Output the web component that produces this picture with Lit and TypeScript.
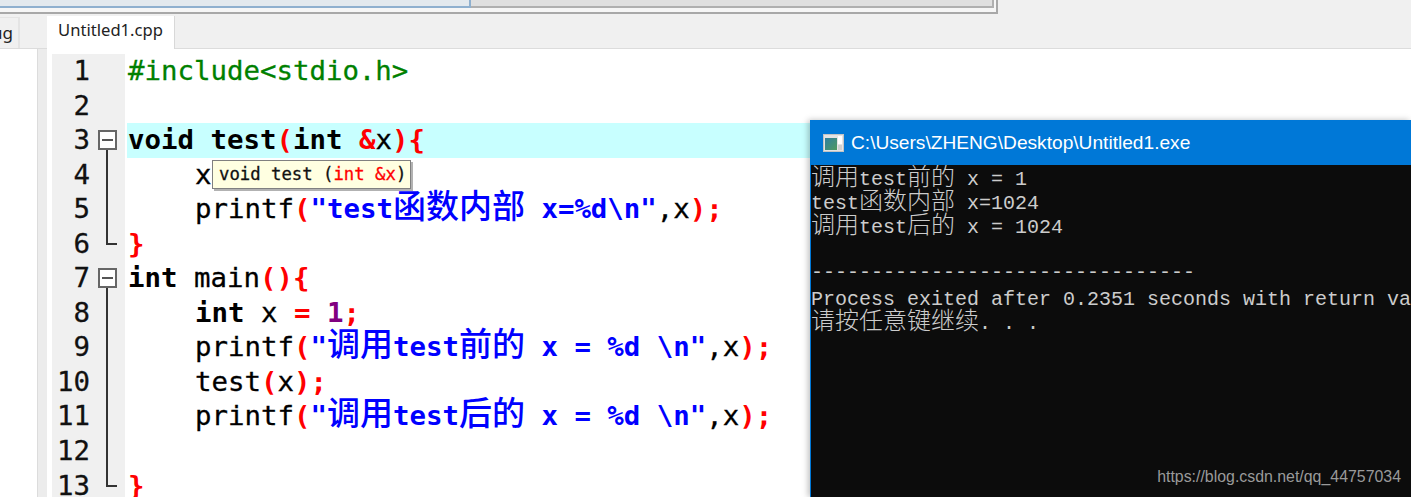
import { LitElement, html, css } from "lit";
import { customElement } from "lit/decorators.js";

type Seg = [string, string?];
const k = "k", r = "r", s = "s", g = "g", n = "n";
const lines: { segs: Seg[]; indent?: boolean; cur?: boolean; fold?: string }[] = [
  { segs: [["#include<stdio.h>", g]] },
  { segs: [] },
  { segs: [["void test", k], ["(", r], ["int ", k], ["&", r], ["x"], ["){", r]], cur: true, fold: "open" },
  { segs: [["x"]], indent: true, fold: "line" },
  { segs: [["printf"], ["(", r], ['"test函数内部 x=%d\\n"', s], [",x"], [");", r]], indent: true, fold: "line" },
  { segs: [["}", r]], fold: "end" },
  { segs: [["int ", k], ["main"], ["(){", r]], fold: "open" },
  { segs: [["int ", k], ["x "], ["= ", r], ["1", n], [";", r]], indent: true, fold: "line" },
  { segs: [["printf"], ["(", r], ['"调用test前的 x = %d \\n"', s], [",x"], [");", r]], indent: true, fold: "line" },
  { segs: [["test"], ["(", r], ["x"], [");", r]], indent: true, fold: "line" },
  { segs: [["printf"], ["(", r], ['"调用test后的 x = %d \\n"', s], [",x"], [");", r]], indent: true, fold: "line" },
  { segs: [], fold: "line" },
  { segs: [["}", r]], fold: "end" },
];

const cjk = /([\u4e00-\u9fff]+)/;
const mixed = (t: string) =>
  t.split(cjk).map((p, i) => (i % 2 ? html`<span class="han">${p}</span>` : p));

@customElement("app-root")
export class AppRoot extends LitElement {
  static styles = css`
    :host { display: block; position: relative; width: 1411px; height: 497px; overflow: hidden; background: #f0f0f0;
      font-family: "Liberation Sans", sans-serif; }
    .top { height: 14px; display: flex; background: #f0f0f0; }
    .frame { width: 998px; height: 14px; box-sizing: border-box; display: flex; background: #f6f6f6;
      border-right: 2px solid #a8a8a8; border-bottom: 2px solid #a8a8a8; padding-right: 2px; padding-bottom: 4px; }
    .btn { width: 471px; height: 8px; background: #e3e9ee; border-right: 2px solid #8fb0cf; border-bottom: 2px solid #8fb0cf; box-sizing: border-box; }
    .rest { flex: 1; height: 8px; background: #e0e0e0; border-right: 2px solid #b0b0b0; border-bottom: 2px solid #b0b0b0; box-sizing: border-box; }
    .tabs { height: 34px; display: flex; align-items: flex-end; border-bottom: 1px solid #dcdcdc; }
    .ltab { width: 20px; height: 31px; background: #f0f0f0; border-right: 2px solid #e4e4e4; border-top: 1px solid #e4e4e4;
      box-sizing: border-box; font: 17px/29px "Noto Sans", sans-serif; color: #222; overflow: hidden; display: flex; justify-content: flex-end; padding-right: 5px; }
    .tab { margin-left: 27px; width: 128px; height: 33px; margin-bottom: -1px; background: #fff; box-sizing: border-box; border-right: 1px solid #d8d8d8;
      font: 16.6px/28px "Noto Sans", sans-serif; text-align: center; color: #222; }
    .body { display: flex; height: 449px; }
    .side { width: 38px; background: #fff; border-right: 1px solid #dcdcdc; box-sizing: border-box; }
    .split { width: 9px; background: #ececec; }
    .editor { flex: 1; background: #fff; padding: 5px 0 0 5px; font-family: "DejaVu Sans Mono", monospace; font-size: 27.4px; }
    .row { display: flex; height: 34.55px; line-height: 34.55px; white-space: pre; color: #000; }
    .num { width: 38px; text-align: right; background: #f0f0f0; flex: none; color: #111; -webkit-text-stroke: .3px #111; }
    .gut { width: 35px; background: #f0f0f0; flex: none; position: relative; }
    .code { flex: 1; margin-left: 2px; padding-left: 1px; -webkit-text-stroke: .3px currentColor; }
    .in { padding-left: 67px; }
    .cur { background: #c8ffff; }
    .k { font-weight: 700; -webkit-text-stroke: 0; }
    .r { color: #ff0000; font-weight: 700; -webkit-text-stroke: 0; }
    .s { color: #0000ff; font-weight: 700; -webkit-text-stroke: 0; }
    .g { color: #008000; }
    .n { color: #800080; font-weight: 700; -webkit-text-stroke: 0; }
    .code .han { font-family: "Noto Sans CJK SC", sans-serif; font-size: 33px; line-height: 0; font-weight: 500; }
    .box { position: absolute; left: 8px; top: 7px; width: 19px; height: 20px; box-sizing: border-box; border: 2px solid #666; background: #fff; }
    .box::after { content: ""; position: absolute; left: 2px; right: 2px; top: 7px; height: 2px; background: #555; }
    .v { position: absolute; left: 16px; width: 2px; background: #333; }
    .open .v { top: 27px; bottom: 0; }
    .line .v { top: 0; bottom: 0; }
    .end .v { top: 0; height: 17px; }
    .end .h { position: absolute; left: 16px; top: 16px; width: 11px; height: 2px; background: #333; }
    .tip { position: absolute; left: 212px; top: 160px; height: 29px; width: 199px; box-sizing: border-box; background: #ffffe1;
      border: 1px solid #808080; box-shadow: 2px 2px 0 rgba(0,0,0,.3); font: 400 17.3px/27px "DejaVu Sans Mono", monospace; padding-left: 6px; white-space: pre; color: #111; -webkit-text-stroke: .3px #111; overflow: hidden; }
    .tip b { color: #ff0000; font-weight: 400; -webkit-text-stroke: .3px #ff0000; }
    .con { position: absolute; left: 810px; top: 120px; width: 601px; height: 377px; display: flex; flex-direction: column; background: #0078d7; box-shadow: -2px 0 6px rgba(0,0,0,.25); }
    .title { height: 45px; flex: none; color: #fff; display: flex; align-items: center; gap: 7px; padding-left: 13px; font-size: 19.15px; box-sizing: border-box; padding-top: 1px; }
    .title svg { flex: none; }
    .out { flex: 1; background: #0c0c0c; color: #cccccc; font: 20px/24px "Liberation Mono", monospace; margin-left: 1px; padding-top: 3px; overflow: hidden; position: relative; }
    .out .han { font-family: "Noto Sans CJK SC", sans-serif; font-size: 24px; font-weight: 300; line-height: 0; }
    .ol { height: 24px; white-space: pre; }
    .dash { position: relative; top: -3px; }
    .mark { position: absolute; right: 10px; bottom: 10px; color: #9a9a9a; font: 15.9px/20px "Liberation Sans", sans-serif; }
  `;

  render() {
    const out = [
      "调用test前的 x = 1",
      "test函数内部 x=1024",
      "调用test后的 x = 1024",
      "",
      "--------------------------------",
      "Process exited after 0.2351 seconds with return value 0",
      "请按任意键继续. . .",
    ];
    return html`
      <div class="top"><div class="frame"><div class="btn"></div><div class="rest"></div></div></div>
      <div class="tabs"><div class="ltab">ug</div><div class="tab">Untitled1.cpp</div></div>
      <div class="body">
        <div class="side"></div><div class="split"></div>
        <div class="editor">
          ${lines.map((l, i) => html`<div class="row">
            <div class="num">${i + 1}</div>
            <div class="gut ${l.fold ?? ""}">
              ${l.fold === "open" ? html`<div class="box"></div>` : ""}
              ${l.fold ? html`<div class="v"></div>` : ""}
              ${l.fold === "end" ? html`<div class="h"></div>` : ""}
            </div>
            <div class="code ${l.cur ? "cur" : ""}"><span class="${l.indent ? "in" : ""}">${l.segs.map(([t, c]) => html`<span class="${c ?? ""}">${mixed(t)}</span>`)}</span></div>
          </div>`)}
        </div>
      </div>
      <div class="tip">void test (<b>int &amp;x</b>)</div>
      <div class="con">
        <div class="title">
          <svg width="21" height="18" viewBox="0 0 21 18">
            <defs><linearGradient id="ic" x1="0" y1="0" x2="1" y2="1"><stop offset="0" stop-color="#2f7fa0"/><stop offset="1" stop-color="#4f9a5f"/></linearGradient></defs>
            <rect x=".5" y=".5" width="20" height="17" fill="#e4e4e4" stroke="#c4c4c4"/>
            <rect x="2" y="4" width="12" height="12" fill="url(#ic)"/>
            <rect x="15" y="2" width="4" height="8" fill="#fff"/>
            <rect x="15" y="11" width="4" height="5" fill="#cfcfcf"/>
          </svg>
          <span>C:\\Users\\ZHENG\\Desktop\\Untitled1.exe</span>
        </div>
        <div class="out">${out.map((t) => html`<div class="ol ${t.startsWith("--") ? "dash" : ""}">${mixed(t)}</div>`)}<div class="mark">https://blog.csdn.net/qq_44757034</div></div>
      </div>
    `;
  }
}
